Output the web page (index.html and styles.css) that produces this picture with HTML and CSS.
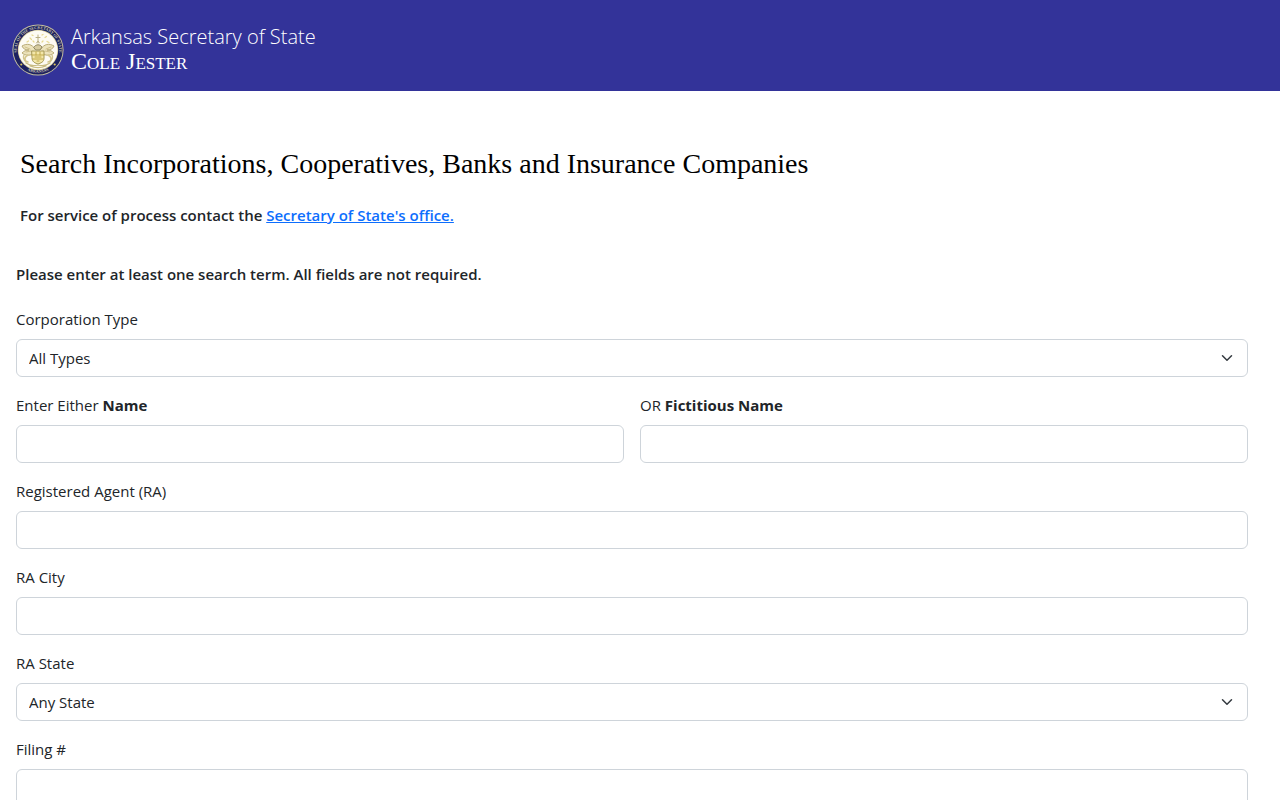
FILE: index.html
```html
<!DOCTYPE html>
<html lang="en">

<head>
  <meta charset="UTF-8">
  <meta name="viewport" content="width=device-width, initial-scale=1.0">
  <title>Search Incorporations, Cooperatives, Banks and Insurance Companies</title>
  <link rel="stylesheet" href="styles.css">
</head>

<body>

  <header class="site-header">
    <!-- state seal -->
    <svg class="seal" viewBox="0 0 52 52" aria-hidden="true">
      <defs>
        <path id="ringTop" d="M10.500 40.500A21.200 21.200 0 1 1 41.500 40.500" />
        <path id="ringBottom" d="M10 42.500A23.500 23.500 0 0 0 42 42.500" />
      </defs>
      <circle cx="26" cy="26" r="25.600" fill="#c3bea0" />
      <circle cx="26" cy="26" r="24.600" fill="#1c2160" />
      <text class="seal-text"><textPath href="#ringTop" startOffset="50%" text-anchor="middle">SEAL OF THE SECRETARY OF STATE</textPath></text>
      <text class="seal-text"><textPath href="#ringBottom" startOffset="50%" text-anchor="middle">ARKANSAS</textPath></text>
      <circle cx="26" cy="26" r="20.200" fill="#d3c892" />
      <circle cx="26" cy="26" r="19.500" fill="#fdfbf3" />
      <circle cx="9.300" cy="40.500" r="1.100" fill="#d9c25f" />
      <circle cx="42.700" cy="40.500" r="1.100" fill="#d9c25f" />
      <g fill="none" stroke-linecap="round" stroke-linejoin="round">
        <!-- goddess of liberty, stars and rays -->
        <path d="M26 11v8M24 13.500h4M24.500 19l1.500-2 1.500 2" stroke="#b8ae83" stroke-width="1" />
        <path d="M18 14l1.500 1.500M33 13.500l1.500-1M15 18l1.500-1M35 17.500l2 1M20 11l1 .5M31 10.500l-1 .5M21 17l1 1M31 17l-1 1" stroke="#e6d88f" stroke-width="1.200" />
        <!-- eagle -->
        <path d="M23 25c-3-5-8-6-13-3 1 3 4 4 7 4-3 0-5 1-7 3 4 3 9 3 12 0M29 25c3-5 8-6 13-3-1 3-4 4-7 4 3 0 5 1 7 3-4 3-9 3-12 0" fill="#ece3bc" stroke="#b9ac78" stroke-width="1" />
        <path d="M13 23l5 2M14 28l5-1M39 23l-5 2M38 28l-5-1" stroke="#cfc08a" stroke-width="1" />
        <path d="M22 23c2-3 6-3 8 0l-2 3h-4z" fill="#d6cba0" stroke="#91885f" stroke-width="1" />
        <!-- shield with supporters -->
        <path d="M20 27h12v7c0 4-3 5-6 6-3-1-6-2-6-6z" fill="#f3e7a9" stroke="#a39654" stroke-width="1" />
        <path d="M20 31h12M21 35h10M24 28v3M28 28v3M23 33h6M25 37h2" stroke="#c0a94a" stroke-width="1" />
        <path d="M16 31c-4 2-4 6 0 7M12 31c-1 2 0 5 2 7M36 31c4 2 4 6 0 7M40 31c1 2 0 5-2 7" stroke="#d3c68d" stroke-width="1.400" />
        <path d="M14 39c4 3 8 3 12 2 4 1 8 1 12-2M18 42c5 2 11 2 16 0" stroke="#c9bc83" stroke-width="1.200" />
      </g>
    </svg>
    <div class="brand">
      <span class="office">Arkansas Secretary of State</span>
      <span class="secretary">Cole Jester</span>
    </div>
  </header>

  <main class="content">
    <div class="intro">
      <h1>Search Incorporations, Cooperatives, Banks and Insurance Companies</h1>
      <p>For service of process contact the <a href="#">Secretary of State's office.</a></p>
    </div>

    <p class="hint">Please enter at least one search term. All fields are not required.</p>

    <form class="search-form">
      <div class="field">
        <label for="corpType">Corporation Type</label>
        <div class="select-wrap">
          <select id="corpType">
            <option>All Types</option>
          </select>
          <svg class="chevron" viewBox="0 0 16 16" aria-hidden="true"><path d="m2 5 6 6 6-6" /></svg>
        </div>
      </div>
      <div class="field half">
        <label for="corpName">Enter Either <b>Name</b></label>
        <input type="text" id="corpName">
      </div>
      <div class="field half">
        <label for="fictName">OR <b>Fictitious Name</b></label>
        <input type="text" id="fictName">
      </div>
      <div class="field">
        <label for="agent">Registered Agent (RA)</label>
        <input type="text" id="agent">
      </div>
      <div class="field">
        <label for="agentCity">RA City</label>
        <input type="text" id="agentCity">
      </div>
      <div class="field">
        <label for="agentState">RA State</label>
        <div class="select-wrap">
          <select id="agentState">
            <option>Any State</option>
          </select>
          <svg class="chevron" viewBox="0 0 16 16" aria-hidden="true"><path d="m2 5 6 6 6-6" /></svg>
        </div>
      </div>
      <div class="field">
        <label for="filing">Filing #</label>
        <input type="text" id="filing">
      </div>
    </form>
  </main>

</body>

</html>
```
FILE: styles.css
```css
* {
  box-sizing: border-box;
}

body {
  margin: 0;
  font-family: "Open Sans", sans-serif;
  font-size: 15px;
  line-height: 24px;
  color: #212529;
  background-color: #fff;
}

.site-header {
  display: flex;
  align-items: flex-start;
  gap: 7px;
  padding: 24px 12px 15px;
  background-color: #333399;
  color: #fff;
}

.seal {
  width: 52px;
  height: 52px;
}

.seal-text {
  fill: #c9c6b4;
  font-family: "Liberation Serif", serif;
  font-size: 4px;
  font-weight: 700;
}

.brand {
  display: flex;
  flex-direction: column;
}

.office {
  font-size: 20px;
  font-weight: 300;
  line-height: 25px;
}

.secretary {
  font-family: "Liberation Serif", serif;
  font-size: 24px;
  font-variant: small-caps;
  line-height: 24px;
}

.content {
  padding: 56px 32px 32px 16px;
}

.intro {
  padding-left: 4px;
}

h1 {
  margin: 0 0 22px;
  font-family: "Liberation Serif", serif;
  font-size: 28px;
  font-weight: 400;
  line-height: 34px;
  color: #000;
}

p {
  margin: 0;
  font-weight: 600;
}

a {
  color: #0d6efd;
}

.hint {
  margin: 35px 0 21px;
}

.search-form {
  display: grid;
  grid-template-columns: 1fr 1fr;
  gap: 16px;
}

.field {
  grid-column: span 2;
}

.half {
  grid-column: span 1;
}

label {
  display: block;
  margin-bottom: 8px;
}

input,
select {
  display: block;
  width: 100%;
  height: 38px;
  padding: 6px 12px;
  border: 1px solid #ced4da;
  border-radius: 6px;
  background-color: #fff;
  font: inherit;
  color: inherit;
}

select {
  appearance: none;
}

.select-wrap {
  position: relative;
}

.chevron {
  position: absolute;
  top: 13px;
  right: 15px;
  width: 12px;
  height: 12px;
  fill: none;
  stroke: #343a40;
  stroke-width: 2;
  stroke-linecap: round;
  stroke-linejoin: round;
  pointer-events: none;
}

@media (max-width: 600px) {
  .half {
    grid-column: span 2;
  }
}
```
